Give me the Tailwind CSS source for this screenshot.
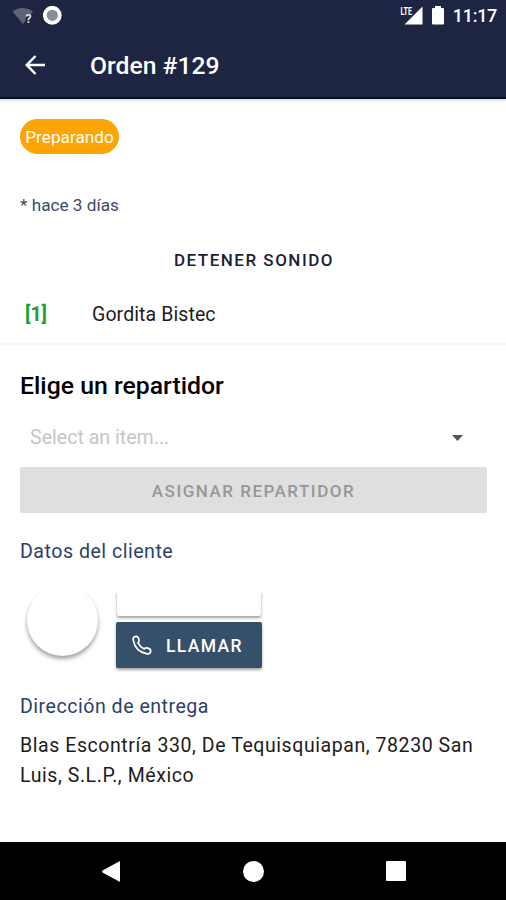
<!DOCTYPE html>
<html lang="es">
<head>
    <meta charset="UTF-8">
    <meta name="viewport" content="width=device-width, initial-scale=1.0">
    <title>Orden #129</title>
    <script src="https://cdn.jsdelivr.net/npm/@tailwindcss/browser@4"></script>
</head>
<body class="bg-white">
    <div class="w-[506px] h-[900px] flex flex-col overflow-hidden bg-white font-[Roboto,sans-serif] text-black">

        <!-- Barra de estado y encabezado -->
        <header class="h-[99px] shrink-0 bg-[#1d2542] border-b-2 border-[#0a0d20] text-white shadow-[0_2px_2px_rgba(0,0,0,0.14)]">
            <div class="h-8 flex items-center justify-between pl-3 pr-[9px]">
                <div class="flex items-center gap-[9px]">
                    <svg class="w-[22px] h-5" viewBox="0 0 22 20">
                        <path d="M0.500 5.500C6 0.800 15.500 0.800 21 5.500L18.500 8.500L14 10L13.500 15L11 18Z" fill="#5d637a"/>
                        <text x="13.500" y="16.500" font-size="12" font-weight="700" fill="#e4e5ea">?</text>
                    </svg>
                    <svg class="w-5 h-5" viewBox="0 0 20 20">
                        <circle cx="9.300" cy="9.300" r="7.500" fill="#8b8d9b" stroke="#fff" stroke-width="3.800"/>
                    </svg>
                </div>
                <div class="flex items-center">
                    <svg class="w-6 h-5" viewBox="0 0 24 20">
                        <path d="M23.500 0.500V18.500H5.500Z" fill="#fff"/>
                        <text x="1.500" y="8.500" font-size="10" font-weight="700" textLength="11.500" lengthAdjust="spacingAndGlyphs" fill="#fff" stroke="#1d2542" stroke-width="1.500" paint-order="stroke">LTE</text>
                    </svg>
                    <svg class="w-3 h-5 ml-[9px]" viewBox="0 0 12 20">
                        <path d="M3 0H9V2H11Q12 2 12 3V17.500Q12 18.500 11 18.500H1Q0 18.500 0 17.500V3Q0 2 1 2H3Z" fill="#fff"/>
                    </svg>
                    <span class="ml-[9px] text-[18px] leading-none font-medium tracking-[-0.3px]">11:17</span>
                </div>
            </div>
            <div class="h-[66px] flex items-center pl-[25px]">
                <svg class="w-5 h-5" viewBox="0 0 20 20" fill="none" stroke="#fff" stroke-width="2.500">
                    <path d="M20 10H2M10.500 1L1.800 10L10.500 19"/>
                </svg>
                <h1 class="ml-[45px] pt-0.5 text-[24.700px] leading-none font-medium">Orden #129</h1>
            </div>
        </header>

        <!-- Estado del pedido -->
        <section class="h-[246px] shrink-0 border-b-2 border-[#f7f7f7] pt-5">
            <span class="ml-5 w-[99px] h-[35px] rounded-full bg-[#ffa405] text-white text-[17.200px] flex items-center justify-center pt-0.5">Preparando</span>
            <p class="ml-5 mt-[41px] text-[17.200px] leading-5 text-[#3a4c68]">* hace 3 días</p>
            <div class="mt-[35px] pl-0.5 text-center text-[17px] leading-5 font-medium tracking-[1.5px] text-[#1b1f38]">DETENER SONIDO</div>
            <div class="mt-[33px] flex leading-6 text-[19.500px]">
                <span class="w-[67px] ml-[25px] font-bold text-[#21a038]">[1]</span>
                <span class="tracking-[0.1px] text-[#1c1c1c]">Gordita Bistec</span>
            </div>
        </section>

        <!-- Repartidor -->
        <section class="px-5 pt-[25px]">
            <h2 class="text-[24.800px] leading-8 font-medium">Elige un repartidor</h2>
            <div class="mt-[20px] h-8 flex items-center justify-between pl-2.5 pr-[23px]">
                <span class="text-[19.600px] text-[#c5c5ca]">Select an item...</span>
                <svg class="w-[11px] h-[6px]" viewBox="0 0 11 6"><path d="M0 0H11L5.500 6Z" fill="#555"/></svg>
            </div>
            <button class="mt-[13px] w-[467px] h-[46px] pt-[3px] block rounded-[2px] bg-[#dfdfdf] text-[#979797] text-[17px] font-medium tracking-[1.5px]">ASIGNAR REPARTIDOR</button>
        </section>

        <!-- Datos del cliente -->
        <section class="px-5 pt-[27px]">
            <h3 class="text-[19.600px] leading-6 tracking-[0.500px] text-[#2b426c]">Datos del cliente</h3>
            <div class="mt-[29px] h-[82px] flex overflow-hidden">
                <div class="-mt-[8px] ml-[7px] w-[71px] h-[71px] rounded-full bg-white shadow-[0_3px_4px_rgba(0,0,0,0.38)]"></div>
                <div class="ml-[18px] w-[146px]">
                    <div class="-mt-5 mx-px h-[43px] rounded-[2px] bg-white shadow-[0_2px_3px_rgba(0,0,0,0.38)]"></div>
                    <button class="mt-[6px] relative w-[146px] h-[46px] flex items-center rounded-[2px] bg-[#364f6b] text-white pl-[15px] shadow-[0_2px_3px_rgba(0,0,0,0.35)]">
                        <svg class="w-[21px] h-[21px]" viewBox="0 0 24 24" fill="none" stroke="#fff" stroke-width="2" stroke-linejoin="round">
                            <path d="M2.500 5.500C2 3 4 1.500 6 1.500C7.500 1.500 8.500 3 9 5C9.500 7 9.500 7.500 8 9C9.500 12 12 14.500 15 16C16.500 14.500 17 14.500 19 15C21 15.500 22.500 16.500 22.500 18C22.500 20 21 22 18.500 21.500C10 20 4 14 2.500 5.500Z"/>
                        </svg>
                        <span class="ml-[14px] pt-[3px] text-[17.500px] leading-none font-medium tracking-[1.350px]">LLAMAR</span>
                    </button>
                </div>
            </div>
            <h3 class="mt-[20px] text-[19.600px] leading-6 tracking-[0.500px] text-[#2b426c]">Dirección de entrega</h3>
            <p class="mt-[12px] text-[19.500px] leading-[30px] tracking-[0.570px] text-[#1c1c1c] whitespace-nowrap">Blas Escontría 330, De Tequisquiapan, 78230 San<br>Luis, S.L.P., México</p>
        </section>

        <!-- Barra de navegación -->
        <nav class="mt-auto h-[58px] shrink-0 bg-black flex items-center pl-[102px]">
            <svg class="w-[18px] h-[21px]" viewBox="0 0 18 21"><path d="M18 0V21L0.500 11.500Q-0.200 10.500 0.500 9.500Z" fill="#fff"/></svg>
            <div class="ml-[123px] w-[21px] h-[21px] rounded-full bg-white"></div>
            <div class="ml-[122px] w-5 h-5 rounded-[1px] bg-white"></div>
        </nav>
    </div>
</body>
</html>
